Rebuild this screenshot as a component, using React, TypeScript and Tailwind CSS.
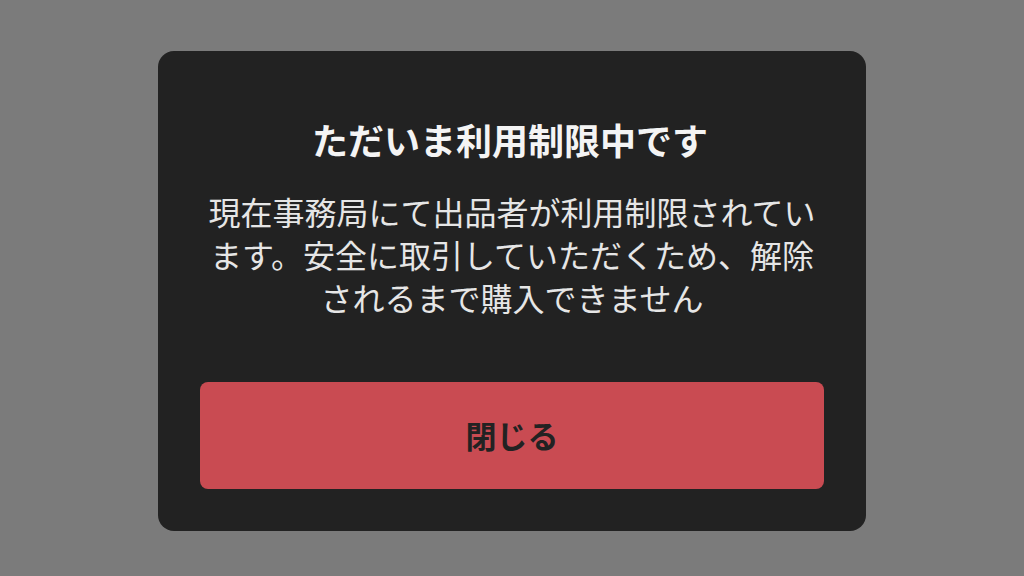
export default function App() {
  return (
    <div
      className="w-[1024px] h-[576px] bg-[#7b7b7b] flex items-start justify-center pt-[51px]"
      style={{ fontFamily: '"Noto Sans CJK JP", "Noto Sans", sans-serif' }}
    >
      <div className="w-[708px] h-[480px] bg-[#222222] rounded-[16px] px-[42px] pt-[64px] flex flex-col">
        <h1 className="text-[#f4f4f4] text-[36px] leading-[48px] font-semibold text-center pr-[4px]">
          ただいま利用制限中です
        </h1>
        <p className="mt-[27px] text-[#e6e6e6] text-[32px] leading-[43px] text-center">
          現在事務局にて出品者が利用制限されています。安全に取引していただくため、解除されるまで購入できません
        </p>
        <button className="mt-[63px] h-[107px] w-full rounded-[8px] bg-[#c94b52] text-[#222222] text-[31px] font-semibold">
          閉じる
        </button>
      </div>
    </div>
  );
}
